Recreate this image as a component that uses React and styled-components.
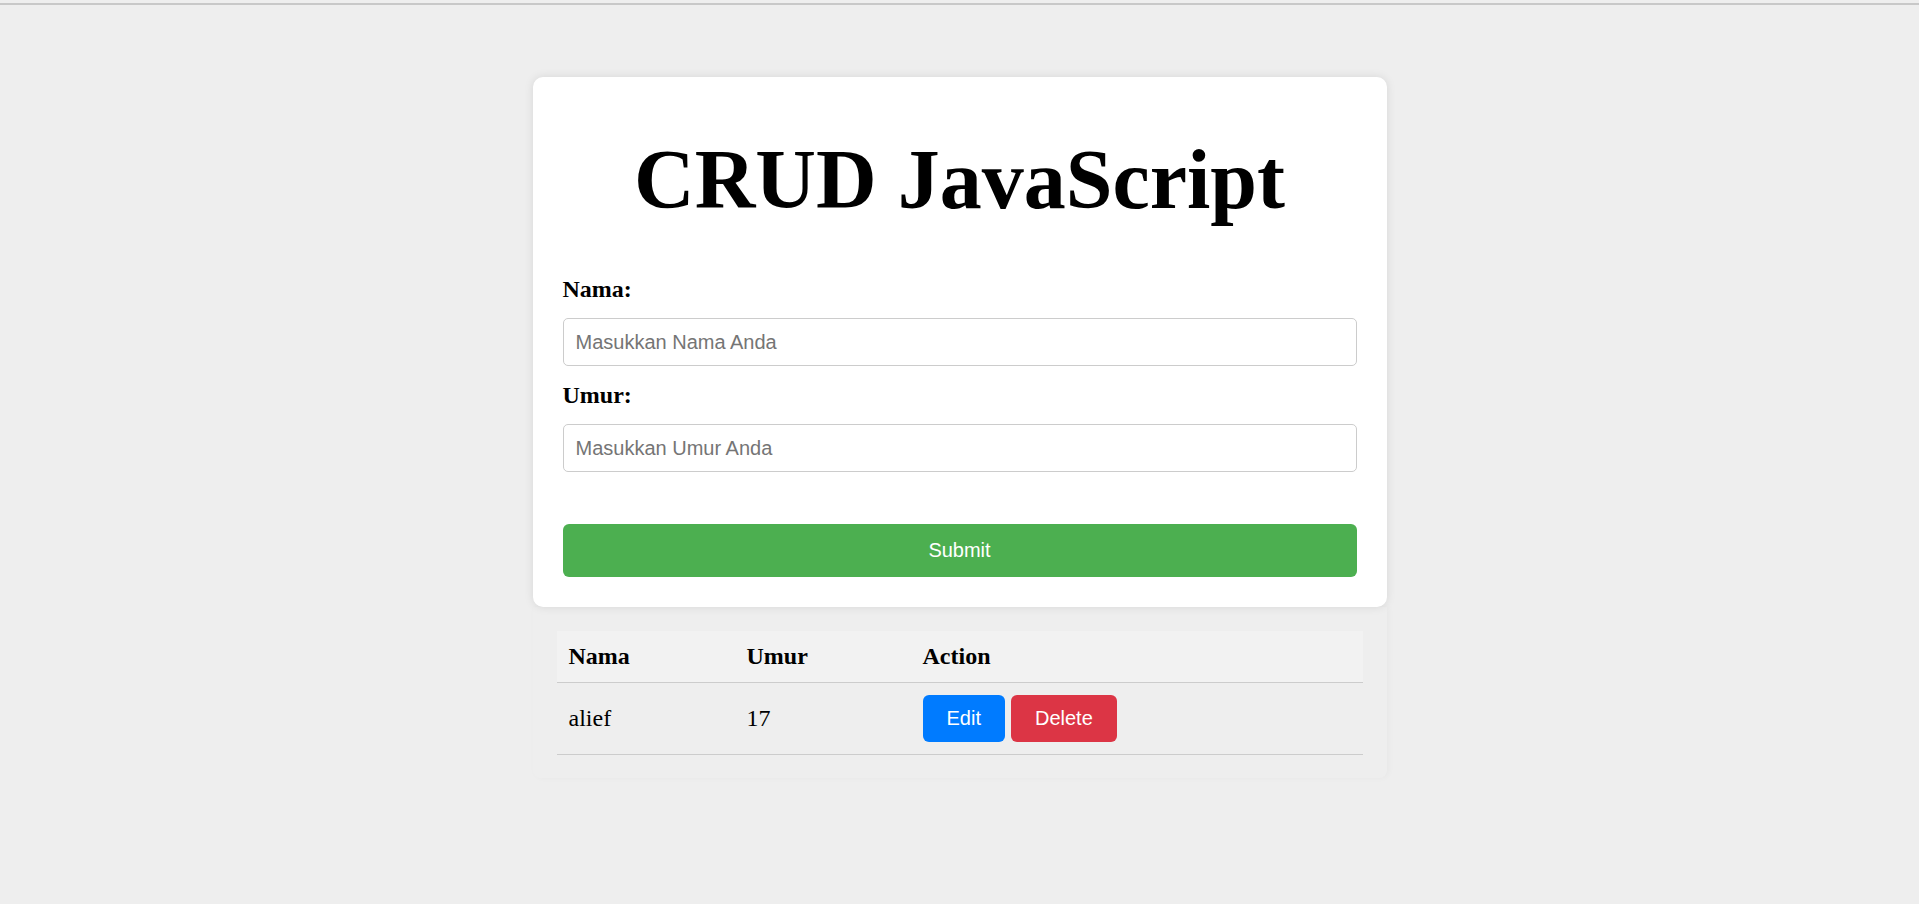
import React from "react";
import styled, { createGlobalStyle } from "styled-components";

const GlobalStyle = createGlobalStyle`
  html, body {
    margin: 0;
    padding: 0;
    background: #eeeeee;
  }
  body {
    font-family: "Liberation Serif", "Times New Roman", serif;
    color: #000;
  }
  * { box-sizing: border-box; }
`;

const TopRule = styled.div`
  margin-top: 3px;
  height: 2px;
  background: #c8c8c8;
`;

const Page = styled.main`
  display: flex;
  flex-direction: column;
  align-items: center;
  padding-top: 72px;
  padding-bottom: 40px;
`;

const Column = styled.div`
  width: 854px;
  display: flex;
  flex-direction: column;
`;

const Card = styled.section`
  position: relative;
  z-index: 1;
  background: #ffffff;
  border-radius: 10px;
  box-shadow: 0 0 10px rgba(0, 0, 0, 0.1);
  padding: 30px;
  display: flex;
  flex-direction: column;
`;

const Title = styled.h1`
  margin: 25px 0 47px;
  font-family: "Liberation Serif", "Times New Roman", serif;
  font-weight: 700;
  font-size: 84px;
  line-height: 96px;
  text-align: center;
`;

const Label = styled.label`
  display: block;
  font-family: "Liberation Serif", "Times New Roman", serif;
  font-weight: 700;
  font-size: 24px;
  line-height: 28px;
  margin-bottom: 15px;
`;

const Input = styled.input`
  display: block;
  width: 100%;
  height: 48px;
  padding: 0 12px;
  margin-bottom: ${(p) => p.$gap || 15}px;
  border: 1px solid #cccccc;
  border-radius: 5px;
  background: #fff;
  font-family: "Liberation Sans", Arial, sans-serif;
  font-size: 20px;
  color: #000;
  outline: none;
  &::placeholder {
    color: #757575;
  }
`;

const SubmitButton = styled.button`
  width: 100%;
  height: 53px;
  border: none;
  border-radius: 6px;
  background: #4caf50;
  color: #ffffff;
  font-family: "Liberation Sans", Arial, sans-serif;
  font-size: 20px;
  cursor: pointer;
`;

const TableWrap = styled.section`
  border-radius: 0 0 8px 8px;
  box-shadow: 2px 0 6px rgba(0, 0, 0, 0.03);
  padding: 24px 24px 23px;
`;

const Table = styled.table`
  width: 100%;
  border-collapse: collapse;
  table-layout: fixed;
  font-family: "Liberation Serif", "Times New Roman", serif;
  font-size: 24px;
`;

const HeadCell = styled.th`
  width: ${(p) => (p.$w ? `${p.$w}px` : "auto")};
  background: #f2f2f2;
  text-align: left;
  font-weight: 700;
  padding: 12px;
  line-height: 27px;
  border-bottom: 1px solid #cccccc;
`;

const Cell = styled.td`
  padding: 12px;
  line-height: 27px;
  border-bottom: 1px solid #cccccc;
  vertical-align: middle;
`;

const Actions = styled.div`
  display: flex;
  gap: 6px;
`;

const ActionButton = styled.button`
  height: 47px;
  padding: 0 24px;
  border: none;
  border-radius: 6px;
  background: ${(p) => (p.$variant === "danger" ? "#dc3545" : "#007bff")};
  color: #ffffff;
  font-family: "Liberation Sans", Arial, sans-serif;
  font-size: 20px;
  cursor: pointer;
`;

const rows = [{ nama: "alief", umur: 17 }];

export default function App() {
  return (
    <>
      <GlobalStyle />
      <TopRule />
      <Page>
        <Column>
          <Card>
            <Title>CRUD JavaScript</Title>
            <Label htmlFor="nama">Nama:</Label>
            <Input id="nama" type="text" placeholder="Masukkan Nama Anda" />
            <Label htmlFor="umur">Umur:</Label>
            <Input id="umur" type="text" placeholder="Masukkan Umur Anda" $gap={52} />
            <SubmitButton type="button">Submit</SubmitButton>
          </Card>
          <TableWrap>
            <Table>
              <thead>
                <tr>
                  <HeadCell $w={178}>Nama</HeadCell>
                  <HeadCell $w={176}>Umur</HeadCell>
                  <HeadCell>Action</HeadCell>
                </tr>
              </thead>
              <tbody>
                {rows.map((r) => (
                  <tr key={r.nama}>
                    <Cell>{r.nama}</Cell>
                    <Cell>{r.umur}</Cell>
                    <Cell>
                      <Actions>
                        <ActionButton type="button">Edit</ActionButton>
                        <ActionButton type="button" $variant="danger">
                          Delete
                        </ActionButton>
                      </Actions>
                    </Cell>
                  </tr>
                ))}
              </tbody>
            </Table>
          </TableWrap>
        </Column>
      </Page>
    </>
  );
}
